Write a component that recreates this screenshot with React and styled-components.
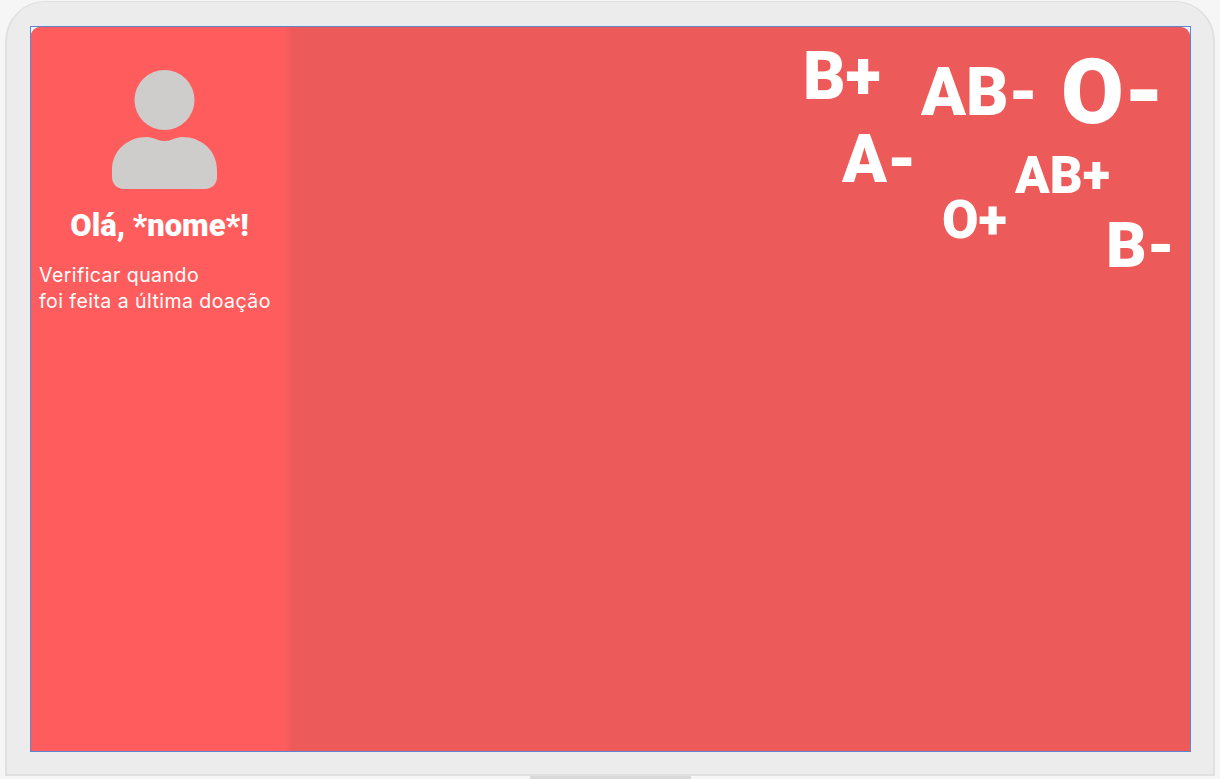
import React from "react";
import styled, { createGlobalStyle } from "styled-components";

const Global = createGlobalStyle`
  html, body { margin: 0; padding: 0; background: #f6f6f6; }
  body { font-family: "Inter", "Liberation Sans", sans-serif; overflow: hidden; }
  #root { width: 1220px; height: 779px; }
`;

const Page = styled.div`
  width: 1220px;
  height: 779px;
  box-sizing: border-box;
  padding: 1px 5px 0 5px;
  display: flex;
  flex-direction: column;
  align-items: center;
`;

const Lid = styled.div`
  width: 100%;
  height: 775px;
  flex: none;
  box-sizing: border-box;
  padding: 24px 22px 22px 23px;
  background: #ececec;
  border-style: solid;
  border-color: #e0e0e0;
  border-width: 1px 2px 2px 2px;
  border-radius: 40px 40px 0 0;
`;

const Bezel = styled.div`
  height: 100%;
  box-sizing: border-box;
  background: #f3f8fd;
  border: 1px solid #5b86d6;
`;

const Screen = styled.main`
  position: relative;
  height: 100%;
  display: flex;
  background: #ec5a5a;
  border-radius: 9px 9px 0 0;
  overflow: hidden;
`;

const Sidebar = styled.aside`
  width: 262px;
  flex: none;
  box-sizing: border-box;
  padding: 43px 13px 0 8px;
  display: flex;
  flex-direction: column;
  background: linear-gradient(90deg, #ff5d5d calc(100% - 9px), #ec5a5a 100%);
  color: #fff;
`;

const Avatar = styled.svg`
  width: 105px;
  height: 119px;
  display: block;
  align-self: flex-start;
  margin-left: 73px;
`;

const Greeting = styled.h1`
  margin: 18px 0 0 0;
  font-family: "Roboto", sans-serif;
  font-weight: 900;
  font-size: 31px;
  line-height: 38px;
  text-align: center;
  white-space: nowrap;
`;

const Check = styled.p`
  margin: 18px 0 0 0;
  font-family: "Inter", sans-serif;
  font-weight: 400;
  font-size: 19.5px;
  letter-spacing: 0.45px;
  line-height: 25.5px;
  white-space: nowrap;
`;

const Type = styled.span`
  position: absolute;
  left: ${(p) => p.$x}px;
  top: ${(p) => p.$y}px;
  font-family: "Roboto", sans-serif;
  font-weight: 900;
  font-size: ${(p) => p.$size}px;
  line-height: 1;
  color: #fff;
  white-space: nowrap;
`;

const Base = styled.div`
  width: 100%;
  height: 3px;
  flex: none;
  display: flex;
  justify-content: center;
`;

const Notch = styled.div`
  width: 161px;
  height: 3px;
  background: #d9d9d9;
`;

const types = [
  { t: "B+", x: 772, y: 17, s: 66 },
  { t: "AB-", x: 890, y: 33, s: 66 },
  { t: "O-", x: 1030, y: 20, s: 91 },
  { t: "A-", x: 811, y: 100, s: 66 },
  { t: "AB+", x: 984, y: 123, s: 51 },
  { t: "O+", x: 911, y: 167, s: 53 },
  { t: "B-", x: 1075, y: 187, s: 63 },
];

export default function App() {
  return (
    <Page>
      <Global />
      <Lid>
        <Bezel>
          <Screen>
            <Sidebar>
              <Avatar viewBox="0 0 105 119" aria-label="Usuário">
                <circle cx="52.5" cy="30" r="30" fill="#cfcdcc" />
                <path
                  d="M0 100C0 80 16 67 35 67C41 67 46 71 52.5 71C59 71 64 67 70 67C89 67 105 80 105 100V107C105 114 100 119 93 119H12C5 119 0 114 0 107Z"
                  fill="#cfcdcc"
                />
              </Avatar>
              <Greeting>Olá, *nome*!</Greeting>
              <Check>
                Verificar quando
                <br />
                foi feita a última doação
              </Check>
            </Sidebar>
            {types.map((b) => (
              <Type key={b.t} $x={b.x} $y={b.y} $size={b.s}>
                {b.t}
              </Type>
            ))}
          </Screen>
        </Bezel>
      </Lid>
      <Base>
        <Notch />
      </Base>
    </Page>
  );
}
